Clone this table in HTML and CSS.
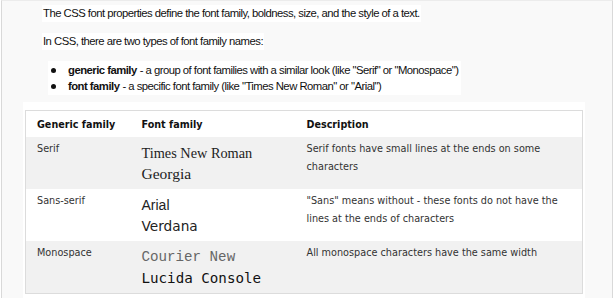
FILE: index.html
```html
<!DOCTYPE html>
<html>
<head>
<meta charset="utf-8">
<link rel="stylesheet" href="styles.css">
</head>
<body>
<div class="page">
  <p class="para para-first">The CSS font properties define the font family, boldness, size, and the style of a text.</p>
  <p class="para para-second">In CSS, there are two types of font family names:</p>
  <ul class="list">
    <li><b>generic family</b> - a group of font families with a similar look (like "Serif" or "Monospace")</li>
    <li><b>font family</b> - a specific font family (like "Times New Roman" or "Arial")</li>
  </ul>
  <div class="table-wrap">
    <table class="fonts">
      <colgroup>
        <col class="c1">
        <col class="c2">
        <col class="c3">
      </colgroup>
      <thead>
        <tr><th>Generic family</th><th>Font family</th><th>Description</th></tr>
      </thead>
      <tbody>
        <tr class="alt">
          <td class="label">Serif</td>
          <td class="names"><div class="f-times">Times New Roman</div><div class="f-georgia">Georgia</div></td>
          <td class="desc">Serif fonts have small lines at the ends on some characters</td>
        </tr>
        <tr>
          <td class="label">Sans-serif</td>
          <td class="names"><div class="f-arial">Arial</div><div class="f-verdana">Verdana</div></td>
          <td class="desc">"Sans" means without - these fonts do not have the lines at the ends of characters</td>
        </tr>
        <tr class="alt">
          <td class="label">Monospace</td>
          <td class="names"><div class="f-courier">Courier New</div><div class="f-lucida">Lucida Console</div></td>
          <td class="desc">All monospace characters have the same width</td>
        </tr>
      </tbody>
    </table>
  </div>
</div>
</body>
</html>
```

FILE: styles.css
```css
html, body {
  margin: 0;
  padding: 0;
  background: #ffffff;
}
body {
  width: 614px;
  height: 298px;
  overflow: hidden;
}
.page {
  margin-left: 1px;
  width: 610px;
  height: 297px;
  border-left: 1px solid #d9d9d9;
  border-right: 1px solid #d9d9d9;
  border-top: 1px solid #ececec;
  background: #f9f9f9;
  display: flex;
  flex-direction: column;
  align-items: flex-start;
  overflow: hidden;
}
.para {
  margin: 0;
  background: #ffffff;
  font-family: "Liberation Sans", Arial, sans-serif;
  font-size: 11.3px;
  letter-spacing: -0.52px;
  line-height: 17px;
  color: #111;
  padding: 0 1px;
}
.para-first {
  margin: 4px 0 0 40px;
}
.para-second {
  margin: 11px 0 0 40px;
}
.list {
  margin: 11px 0 0 46px;
  padding: 1px 3px 1px 0;
  background: #ffffff;
  font-family: "Liberation Sans", Arial, sans-serif;
  font-size: 11.3px;
  letter-spacing: -0.52px;
  line-height: 16px;
  color: #111;
  list-style: none;
}
.list li {
  display: flex;
  align-items: center;
}
.list li::before {
  content: "";
  width: 5px;
  height: 5px;
  border-radius: 50%;
  background: #111;
  margin: 0 12px 0 3px;
  flex: none;
}
.list b {
  font-weight: bold;
  margin-right: 3px;
}
.table-wrap {
  margin: 7px 0 0 21px;
  padding: 8px 2px 4px 2px;
  background: #ffffff;
}
.fonts {
  border-collapse: collapse;
  border: 1px solid #dcdcdc;
  width: 558px;
  table-layout: fixed;
  font-family: "DejaVu Sans", Verdana, sans-serif;
  color: #222;
}
.c1 { width: 105px; }
.c2 { width: 165px; }
.fonts th {
  text-align: left;
  font-size: 9.6px;
  font-weight: bold;
  line-height: 14px;
  padding: 7px 8px 5px 11px;
  color: #111;
  background: #ffffff;
}
.fonts td {
  vertical-align: top;
  padding: 6px 8px 5px 11px;
}
.fonts tr.alt td {
  background: #f1f1f1;
}
.fonts td.label,
.fonts td.desc {
  font-size: 9.7px;
  line-height: 18px;
  padding-top: 3px;
  color: #333;
}
.names div {
  line-height: 20.5px;
  white-space: nowrap;
}
.f-times {
  font-family: "Liberation Serif", "Times New Roman", serif;
  font-size: 14.3px;
  color: #222;
}
.f-georgia {
  font-family: "Liberation Serif", Georgia, serif;
  font-size: 15.5px;
  color: #222;
}
.f-arial {
  font-family: "Liberation Sans", Arial, sans-serif;
  font-size: 14px;
  color: #222;
}
.f-verdana {
  font-family: "DejaVu Sans", Verdana, sans-serif;
  font-size: 13.7px;
  color: #222;
}
.f-courier {
  font-family: "Liberation Mono", "Courier New", monospace;
  font-size: 14.2px;
  color: #666;
}
.f-lucida {
  font-family: "DejaVu Sans Mono", "Lucida Console", monospace;
  font-size: 14.2px;
  color: #111;
}
```
